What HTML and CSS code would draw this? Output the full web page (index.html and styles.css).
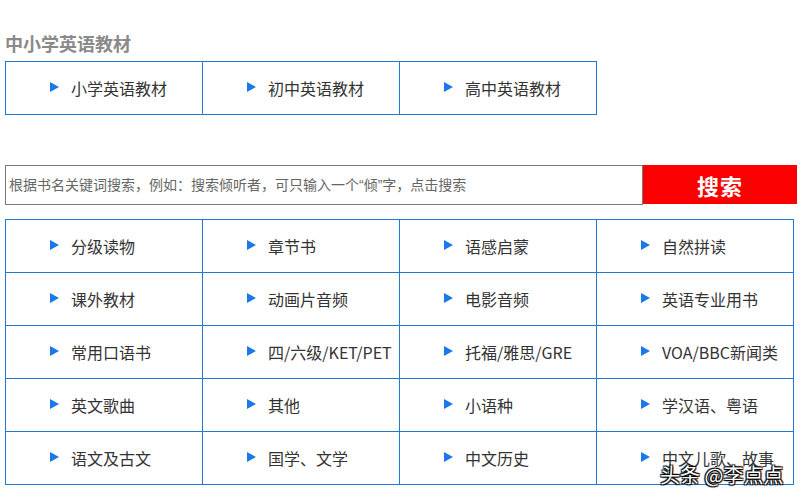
FILE: index.html
```html
<!DOCTYPE html>
<html lang="zh">
<head>
<meta charset="utf-8">
<link rel="stylesheet" href="styles.css">
</head>
<body>
<div class="page">
  <h2 class="title">中小学英语教材</h2>
  <div class="grid grid-3">
    <a class="cell"><span class="tri"></span>小学英语教材</a>
    <a class="cell"><span class="tri"></span>初中英语教材</a>
    <a class="cell"><span class="tri"></span>高中英语教材</a>
  </div>
  <form class="search">
    <input class="search-input" type="text" placeholder="根据书名关键词搜索，例如：搜索倾听者，可只输入一个“倾”字，点击搜索">
    <button class="search-btn" type="button">搜索</button>
  </form>
  <div class="grid grid-4">
    <a class="cell"><span class="tri"></span>分级读物</a>
    <a class="cell"><span class="tri"></span>章节书</a>
    <a class="cell"><span class="tri"></span>语感启蒙</a>
    <a class="cell"><span class="tri"></span>自然拼读</a>
    <a class="cell"><span class="tri"></span>课外教材</a>
    <a class="cell"><span class="tri"></span>动画片音频</a>
    <a class="cell"><span class="tri"></span>电影音频</a>
    <a class="cell"><span class="tri"></span>英语专业用书</a>
    <a class="cell"><span class="tri"></span>常用口语书</a>
    <a class="cell"><span class="tri"></span>四/六级/KET/PET</a>
    <a class="cell"><span class="tri"></span>托福/雅思/GRE</a>
    <a class="cell"><span class="tri"></span>VOA/BBC新闻类</a>
    <a class="cell"><span class="tri"></span>英文歌曲</a>
    <a class="cell"><span class="tri"></span>其他</a>
    <a class="cell"><span class="tri"></span>小语种</a>
    <a class="cell"><span class="tri"></span>学汉语、粤语</a>
    <a class="cell"><span class="tri"></span>语文及古文</a>
    <a class="cell"><span class="tri"></span>国学、文学</a>
    <a class="cell"><span class="tri"></span>中文历史</a>
    <a class="cell"><span class="tri"></span>中文儿歌、故事</a>
  </div>
  <div class="watermark">头条 @李点点</div>
</div>
</body>
</html>
```
FILE: styles.css
```css
* { box-sizing: border-box; }
html, body { margin: 0; padding: 0; background: #fff; }
body {
  font-family: "Microsoft YaHei", "Noto Sans CJK SC", "Noto Sans", sans-serif;
  color: #333;
  width: 801px;
  height: 500px;
  overflow: hidden;
}
.page {
  position: relative;
  padding: 31px 0 0 5px;
  height: 500px;
}
.title {
  margin: 0;
  font-size: 18px;
  line-height: 25px;
  font-weight: bold;
  color: #8a8a8a;
}
.grid {
  display: grid;
  border-left: 1px solid #1f7ad2;
  border-top: 1px solid #1f7ad2;
}
.grid-3 {
  margin-top: 5px;
  grid-template-columns: repeat(3, 197px);
  width: 592px;
}
.grid-4 {
  margin-top: 14px;
  grid-template-columns: repeat(4, 197px);
  width: 789px;
}
.cell {
  display: flex;
  align-items: center;
  height: 53px;
  padding-left: 44px;
  border-right: 1px solid #1f7ad2;
  border-bottom: 1px solid #1f7ad2;
  font-size: 16px;
  color: #333;
  text-decoration: none;
  white-space: nowrap;
}
.tri {
  display: inline-block;
  width: 0;
  height: 0;
  border-top: 5.5px solid transparent;
  border-bottom: 5.5px solid transparent;
  border-left: 9px solid #1a78e8;
  margin-right: 12px;
  margin-top: -2px;
}
.search {
  display: flex;
  margin: 50px 0 0 0;
  height: 40px;
}
.search-input {
  width: 638px;
  height: 40px;
  margin: 0;
  padding: 0 0 0 3px;
  border: 1px solid #7a7a7a;
  font-family: "Liberation Sans", "Noto Sans CJK SC", sans-serif;
  font-size: 14px;
  color: #666;
  outline: none;
}
.search-input::placeholder { color: #666; }
.search-btn {
  width: 154px;
  height: 39px;
  margin: 0;
  padding: 0;
  border: none;
  background: #fa0000;
  color: #fff;
  font-family: "Microsoft YaHei", "Noto Sans CJK SC", sans-serif;
  font-size: 22px;
  font-weight: bold;
  letter-spacing: 1px;
}
.watermark {
  position: absolute;
  left: 660px;
  top: 460px;
  font-size: 20px;
  line-height: 30px;
  color: #fff;
  text-shadow: 0 0 1px #000, 1px 1px 1px #000, -1px -1px 1px #000, 1px -1px 1px #000, -1px 1px 1px #000;
  white-space: nowrap;
}
```
